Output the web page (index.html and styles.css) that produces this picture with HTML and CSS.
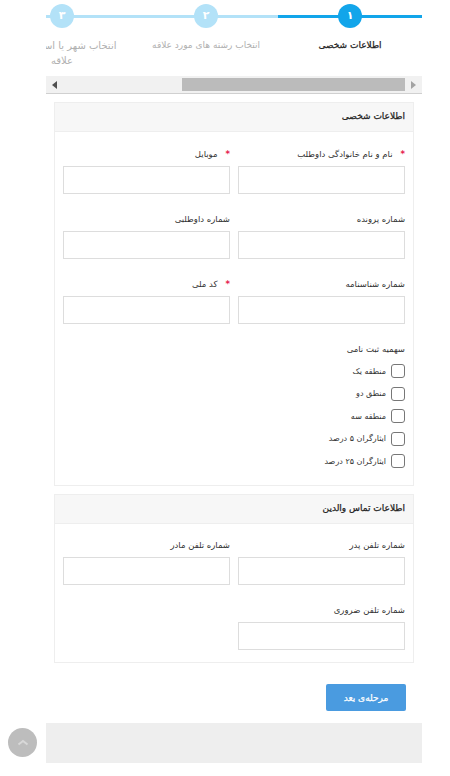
FILE: index.html
```html
<!DOCTYPE html>
<html lang="fa" dir="rtl">
<head>
    <meta charset="UTF-8">
    <meta name="viewport" content="width=device-width, initial-scale=1.0">
    <title>ثبت نام</title>
    <link rel="stylesheet" href="styles.css">
</head>
<body>
    <div class="wrapper">
        <div class="steps">
            <div class="step active">
                <span class="step-num">۱</span>
                <div class="step-label">اطلاعات شخصی</div>
            </div>
            <div class="step">
                <span class="step-num">۲</span>
                <div class="step-label">انتخاب رشته های مورد علاقه</div>
            </div>
            <div class="step">
                <span class="step-num">۳</span>
                <div class="step-label long">انتخاب شهر یا استان مورد<br>علاقه</div>
            </div>
        </div>

        <div class="scrollbar" dir="ltr">
            <svg class="arrow" width="5" height="8" viewBox="0 0 5 8"><path d="M5 0v8L0 4z" fill="#505050"/></svg>
            <div class="thumb"></div>
            <svg class="arrow" width="5" height="8" viewBox="0 0 5 8"><path d="M0 0v8l5-4z" fill="#a3a3a3"/></svg>
        </div>

        <section class="panel">
            <h2 class="panel-title">اطلاعات شخصی</h2>
            <div class="panel-body">
                <div class="fields">
                    <div class="field">
                        <label class="required">نام و نام خانوادگی داوطلب</label>
                        <input type="text">
                    </div>
                    <div class="field">
                        <label class="required">موبایل</label>
                        <input type="text">
                    </div>
                    <div class="field">
                        <label>شماره پرونده</label>
                        <input type="text">
                    </div>
                    <div class="field">
                        <label>شماره داوطلبی</label>
                        <input type="text">
                    </div>
                    <div class="field">
                        <label>شماره شناسنامه</label>
                        <input type="text">
                    </div>
                    <div class="field">
                        <label class="required">کد ملی</label>
                        <input type="text">
                    </div>
                </div>
                <div class="quota">
                    <div class="quota-title">سهمیه ثبت نامی</div>
                    <div class="check"><span class="box"></span>منطقه یک</div>
                    <div class="check"><span class="box"></span>منطق دو</div>
                    <div class="check"><span class="box"></span>منطقه سه</div>
                    <div class="check"><span class="box"></span>ایثارگران ۵ درصد</div>
                    <div class="check"><span class="box"></span>ایثارگران ۲۵ درصد</div>
                </div>
            </div>
        </section>

        <section class="panel">
            <h2 class="panel-title">اطلاعات تماس والدین</h2>
            <div class="panel-body short">
                <div class="fields">
                    <div class="field">
                        <label>شماره تلفن پدر</label>
                        <input type="text">
                    </div>
                    <div class="field">
                        <label>شماره تلفن مادر</label>
                        <input type="text">
                    </div>
                    <div class="field">
                        <label>شماره تلفن ضروری</label>
                        <input type="text">
                    </div>
                </div>
            </div>
        </section>

        <div class="actions">
            <button class="next-btn">مرحله‌ی بعد</button>
        </div>

        <div class="footer"></div>
    </div>

    <a class="to-top">
        <svg width="12" height="7" viewBox="0 0 12 7"><path d="M1.500 5.500 6 2l4.500 3.500" fill="none" stroke="#d8d8d8" stroke-width="2"/></svg>
    </a>
</body>
</html>
```

FILE: styles.css
```css
body {
    margin: 0;
    background: #fff;
    font-family: "DejaVu Sans", sans-serif;
    font-size: 8.500px;
    color: #333;
}

.wrapper {
    width: 376px;
    margin-right: 28px;
    height: 776px;
}

/* steps */
.steps {
    display: flex;
    height: 76px;
    overflow: hidden;
}

.step {
    flex: 0 0 144px;
    text-align: center;
    background: linear-gradient(#b3e2f8, #b3e2f8) 0 15px / 100% 3px no-repeat;
    padding-top: 4px;
}

.step.active {
    background-image: linear-gradient(#12a5ea, #12a5ea);
}

.step-num {
    display: block;
    width: 24px;
    height: 24px;
    margin: 0 auto;
    border-radius: 50%;
    background: #b3e2f8;
    color: #fff;
    font-weight: bold;
    font-size: 11px;
    line-height: 24px;
}

.active .step-num {
    background: #12a5ea;
}

.step-label {
    margin: 10px 10px 0;
    font-size: 9px;
    line-height: 15px;
    color: #b0b0b0;
    white-space: nowrap;
}

.step-label.long {
    font-size: 10px;
}

.active .step-label {
    color: #222;
    -webkit-text-stroke: 0.25px #222;
}

/* scrollbar */
.scrollbar {
    display: flex;
    align-items: center;
    height: 17px;
    background: #f1f1f1;
    border-bottom: 1px solid #d0d0d0;
    padding: 0 6px;
}

.thumb {
    height: 13px;
    width: 223px;
    margin-left: 125px;
    margin-right: 6px;
    background: #bbb;
}

/* panels */
.panel {
    margin: 8px 8px 0;
    border: 1px solid #eee;
}

.panel-title {
    margin: 0;
    height: 28px;
    padding: 0 8px;
    background: #f7f7f7;
    border-bottom: 1px solid #eee;
    font-size: 9px;
    font-weight: normal;
    line-height: 27px;
    color: #222;
    -webkit-text-stroke: 0.25px #222;
}

.panel-body {
    padding: 14px 8px 17px;
}

.panel-body.short {
    padding-top: 13px;
    padding-bottom: 12px;
}

.fields {
    display: grid;
    grid-template-columns: 167px 167px;
    column-gap: 8px;
    row-gap: 17px;
}

.field label {
    display: block;
    height: 15px;
    line-height: 15px;
    padding-top: 1px;
    margin-bottom: 4px;
}

.field label.required::before {
    content: "*";
    color: #e6194b;
    font-weight: bold;
    margin-left: 8px;
}

.field input {
    display: block;
    box-sizing: border-box;
    width: 100%;
    height: 28px;
    border: 1px solid #ddd;
    background: #fff;
    padding: 0;
}

/* quota checks */
.quota {
    margin-top: 18px;
}

.quota-title {
    height: 15px;
    line-height: 15px;
    margin-bottom: 7px;
}

.check {
    display: flex;
    align-items: center;
    gap: 5px;
    height: 14px;
    margin-bottom: 8.500px;
    font-size: 8px;
}

.check:last-child {
    margin-bottom: 0;
}

.box {
    box-sizing: border-box;
    width: 14px;
    height: 14px;
    border: 1px solid #777;
    border-radius: 3px;
}

/* bottom */
.actions {
    display: flex;
    padding: 21px 8px 12px;
}

.next-btn {
    width: 80px;
    height: 27px;
    border: none;
    border-radius: 2px;
    background: #4a9be0;
    color: #fff;
    font-family: inherit;
    font-size: 9px;
    -webkit-text-stroke: 0.25px #fff;
    margin-right: 8px;
}

.footer {
    height: 40px;
    background: #eee;
}

.to-top {
    position: fixed;
    left: 8px;
    top: 728px;
    width: 29px;
    height: 29px;
    border-radius: 50%;
    background: #bdbdbd;
    display: flex;
    align-items: center;
    justify-content: center;
}
```
